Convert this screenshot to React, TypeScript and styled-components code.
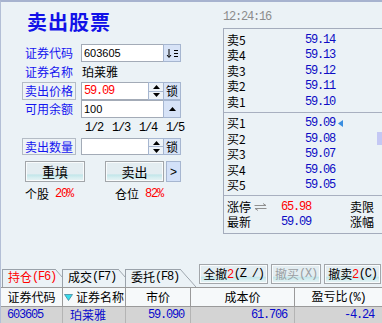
import React from "react";
import styled, { createGlobalStyle } from "styled-components";

const CJK = `"Noto Sans CJK SC", "Liberation Sans", sans-serif`;
const MONO = `"Liberation Mono", "DejaVu Sans Mono", monospace`;
const SANS = `"Liberation Sans", "Noto Sans CJK SC", sans-serif`;

const GlobalStyle = createGlobalStyle`
  html, body { margin: 0; padding: 0; background: #EBF2F6; }
  #root { width: 382px; height: 323px; }
`;

const Screen = styled.div`
  width: 382px;
  height: 323px;
  box-sizing: border-box;
  overflow: hidden;
  background: #ebf2f6;
  border-top: 2px solid #a7b3cf;
  border-left: 1px solid #b3bfd6;
  display: flex;
  flex-direction: column;
  font-family: ${CJK};
  font-size: 12px;
  color: #000;
`;

const TopArea = styled.div`
  display: flex;
  height: 260px;
  flex: none;
`;

const LeftPane = styled.div`
  width: 222px;
  flex: none;
  box-sizing: border-box;
  padding-left: 21px;
  display: flex;
  flex-direction: column;
`;

const Title = styled.div`
  margin: 8px 0 10px 5px;
  font-size: 20px;
  line-height: 24px;
  font-weight: bold;
  color: #1212e8;
  letter-spacing: 1px;
`;

const FormRow = styled.div<{ $h: number; $mt?: number }>`
  display: flex;
  align-items: center;
  gap: 5px;
  height: ${(p) => p.$h}px;
  margin-top: ${(p) => p.$mt ?? 0}px;
`;

const FieldLabel = styled.div<{ $boxed?: boolean }>`
  width: 54px;
  height: 100%;
  box-sizing: border-box;
  display: flex;
  align-items: center;
  justify-content: center;
  color: #1515f0;
  line-height: 14px;
  border: 1px solid ${(p) => (p.$boxed ? "#b4bcc6" : "transparent")};
  background: ${(p) => (p.$boxed ? "#eef3f6" : "transparent")};
`;

const Controls = styled.div`
  width: 100px;
  height: 100%;
  display: flex;
`;

const TextField = styled.div<{ $red?: boolean }>`
  flex: 1;
  min-width: 0;
  height: 100%;
  box-sizing: border-box;
  background: #fff;
  border: 1px solid #a3abb7;
  display: flex;
  align-items: center;
  padding-left: 2px;
  font-family: ${(p) => (p.$red ? MONO : SANS)};
  font-size: ${(p) => (p.$red ? "12px" : "11px")};
  letter-spacing: ${(p) => (p.$red ? "-1.2px" : "0")};
  color: ${(p) => (p.$red ? "#ff0000" : "#000")};
`;

const PlainValue = styled.div`
  color: #000;
  padding-left: 1px;
  line-height: 14px;
`;

const SideBtn = styled.div`
  width: 18px;
  flex: none;
  height: 100%;
  box-sizing: border-box;
  margin-left: -1px;
  border: 1px solid #a6b6d0;
  background: #d7e3f7;
  display: flex;
  align-items: center;
  justify-content: center;
  line-height: 14px;
`;

const Spinner = styled.div`
  width: 16px;
  flex: none;
  height: 100%;
  margin-left: -1px;
  display: flex;
  flex-direction: column;
`;

const SpinHalf = styled.div`
  flex: 1;
  box-sizing: border-box;
  border: 1px solid #a6b6d0;
  background: #eef3f8;
  display: flex;
  align-items: center;
  justify-content: center;
  & + & {
    margin-top: -1px;
  }
`;

const FracRow = styled.div`
  display: flex;
  gap: 9px;
  padding-left: 63px;
  height: 20px;
  align-items: center;
  font-family: ${MONO};
  font-size: 12px;
  letter-spacing: -1.2px;
`;

const ActionRow = styled.div`
  display: flex;
  height: 21px;
  margin-top: 6px;
  padding-left: 3px;
`;

const PushButton = styled.div<{ $w: number; $ml?: number; $disabled?: boolean }>`
  width: ${(p) => p.$w}px;
  margin-left: ${(p) => p.$ml ?? 0}px;
  height: 100%;
  box-sizing: border-box;
  border: 1px solid #a2a6aa;
  box-shadow: inset 0 0 0 1px #f8fbfc;
  background: linear-gradient(
    to bottom,
    #e3edf1 0%,
    #e3edf1 62%,
    #c2e6ea 68%,
    #d6eef0 82%,
    #e9f3f5 100%
  );
  display: flex;
  align-items: center;
  justify-content: center;
  color: ${(p) => (p.$disabled ? "#9a9ea2" : "#000")};
  line-height: 14px;
  white-space: nowrap;
`;

const BigLabel = styled.span`
  font-size: 13px;
`;

const ArrowBtn = styled.div`
  width: 15px;
  margin-left: 2px;
  height: 100%;
  box-sizing: border-box;
  border: 1px solid #a6b6d0;
  background: #d3e1f8;
  display: flex;
  align-items: center;
  justify-content: center;
  font-family: ${SANS};
  font-size: 12px;
`;

const StatusRow = styled.div`
  display: flex;
  margin-top: 5px;
  height: 14px;
  padding-left: 3px;
  align-items: center;
`;

const StatusItem = styled.div`
  width: 90px;
  display: flex;
  gap: 6px;
  align-items: center;
  line-height: 14px;
`;

const Num = styled.span<{ $color?: string }>`
  font-family: ${MONO};
  font-size: 12px;
  letter-spacing: -1.2px;
  color: ${(p) => p.$color ?? "inherit"};
`;

const RightPane = styled.div`
  flex: 1;
  display: flex;
  flex-direction: column;
  padding-top: 9px;
`;

const Clock = styled.div`
  font-family: ${MONO};
  font-size: 12px;
  letter-spacing: -1.2px;
  color: #8c8c8c;
  line-height: 13px;
  height: 13px;
`;

const QuoteBox = styled.div`
  margin-top: 4px;
  height: 206px;
  box-sizing: border-box;
  border: 1px solid #a4acbc;
  border-right: none;
  position: relative;
  display: flex;
  flex-direction: column;
`;

const BookSection = styled.div<{ $last?: boolean }>`
  padding: 3px 0 2px;
  border-bottom: ${(p) => (p.$last ? "none" : "1px solid #a8b0c0")};
  display: flex;
  flex-direction: column;
`;

const BookRow = styled.div`
  height: 15.5px;
  display: flex;
  align-items: center;
  padding-left: 3px;
  line-height: 14px;
`;

const BookLabel = styled.span<{ $w: number }>`
  width: ${(p) => p.$w}px;
  flex: none;
  display: flex;
  align-items: center;
`;

const ScrollThumb = styled.div`
  position: absolute;
  right: 0;
  top: 103px;
  width: 5px;
  height: 13px;
  background: #c4c8f4;
`;

const ToolRow = styled.div`
  height: 25px;
  flex: none;
  display: flex;
  padding-left: 1px;
`;

const TabStrip = styled.div`
  width: 196px;
  flex: none;
  display: flex;
  align-items: flex-end;
`;

const Tab = styled.div<{ $active?: boolean; $w: number }>`
  position: relative;
  width: ${(p) => p.$w}px;
  height: 18px;
  box-sizing: border-box;
  border-top: 1px solid #9aa2aa;
  border-left: 1px solid #9aa2aa;
  background: #ebf2f6;
  margin-right: 7px;
  display: flex;
  align-items: center;
  padding: 0 0 3px 5px;
  color: ${(p) => (p.$active ? "#ff0000" : "#000")};
  line-height: 14px;
  white-space: nowrap;
  &:last-child {
    margin-right: 0;
  }
  &::after {
    content: "";
    position: absolute;
    left: 100%;
    top: -1px;
    width: 16px;
    height: 18px;
    background: linear-gradient(
      to top right,
      transparent calc(50% - 0.7px),
      #9aa2aa 50%,
      transparent calc(50% + 0.7px)
    );
  }
`;

const ToolButtons = styled.div`
  display: flex;
  gap: 3px;
  margin: 2px 0 0 1px;
  height: 20px;
`;

const Red = styled.span`
  color: #ff0000;
  font-family: ${SANS};
`;

const Table = styled.div`
  display: grid;
  grid-template-columns: 62px 63px 65px 104px 1fr;
`;

const HeadCell = styled.div<{ $left?: boolean; $last?: boolean }>`
  height: 20px;
  box-sizing: border-box;
  border-top: 1px solid #9a9a9a;
  border-bottom: 1px solid #9a9a9a;
  border-right: ${(p) => (p.$last ? "none" : "1px solid #9a9a9a")};
  background: #f6f9fa;
  display: flex;
  align-items: center;
  justify-content: ${(p) => (p.$left ? "flex-start" : "center")};
  padding-left: ${(p) => (p.$left ? "1px" : "0")};
  gap: 3px;
  line-height: 14px;
  white-space: nowrap;
`;

const DataCell = styled.div<{ $align: "left" | "right"; $pad: number; $last?: boolean }>`
  height: 16px;
  box-sizing: border-box;
  background: #d4d4d4;
  border-right: ${(p) => (p.$last ? "none" : "1px solid #b4b4b4")};
  color: #0a0acc;
  display: flex;
  align-items: center;
  justify-content: ${(p) => (p.$align === "left" ? "flex-start" : "flex-end")};
  padding: ${(p) => (p.$align === "left" ? `0 0 0 ${p.$pad}px` : `0 ${p.$pad}px 0 0`)};
  line-height: 14px;
  white-space: nowrap;
`;

const SortIcon = () => (
  <svg width="13" height="11" viewBox="0 0 13 11">
    <path d="M3 1 V9" stroke="#000" strokeWidth="1" />
    <path d="M1 7 L3 9.5 L5 7" stroke="#000" strokeWidth="1" fill="none" />
    <path d="M8 2.5 H12 M8 5.5 H12 M8 8.5 H12" stroke="#000" strokeWidth="1" />
  </svg>
);

const TriUp = () => (
  <svg width="7" height="4" viewBox="0 0 7 4">
    <polygon points="0,4 7,4 3.5,0" fill="#000" />
  </svg>
);

const TriDown = () => (
  <svg width="7" height="4" viewBox="0 0 7 4">
    <polygon points="0,0 7,0 3.5,4" fill="#000" />
  </svg>
);

const LeftMarker = () => (
  <svg width="5" height="7" viewBox="0 0 5 7" style={{ marginLeft: 3 }}>
    <polygon points="5,0 5,7 0,3.5" fill="#3a8ee0" />
  </svg>
);

const SwapIcon = () => (
  <svg width="13" height="8" viewBox="0 0 13 8" style={{ marginLeft: 3 }}>
    <path d="M0.5 2.5 H12 L9 0.5" stroke="#909090" strokeWidth="1" fill="none" />
    <path d="M12.5 5.5 H1 L4 7.5" stroke="#909090" strokeWidth="1" fill="none" />
  </svg>
);

const CyanDown = () => (
  <svg width="9" height="7" viewBox="0 0 9 7">
    <polygon points="0.5,0.5 8.5,0.5 4.5,6.5" fill="#36dcea" stroke="#3a7890" strokeWidth="0.7" />
  </svg>
);

const sells = [
  ["卖5", "59.14"],
  ["卖4", "59.13"],
  ["卖3", "59.12"],
  ["卖2", "59.11"],
  ["卖1", "59.10"],
];
const buys = [
  ["买1", "59.09"],
  ["买2", "59.08"],
  ["买3", "59.07"],
  ["买4", "59.06"],
  ["买5", "59.05"],
];

export default function App() {
  return (
    <>
      <GlobalStyle />
      <Screen>
        <TopArea>
          <LeftPane>
            <Title>卖出股票</Title>
            <FormRow $h={18}>
              <FieldLabel>证券代码</FieldLabel>
              <Controls>
                <TextField>603605</TextField>
                <SideBtn>
                  <SortIcon />
                </SideBtn>
              </Controls>
            </FormRow>
            <FormRow $h={20}>
              <FieldLabel>证券名称</FieldLabel>
              <PlainValue>珀莱雅</PlainValue>
            </FormRow>
            <FormRow $h={18}>
              <FieldLabel $boxed>卖出价格</FieldLabel>
              <Controls>
                <TextField $red>59.09</TextField>
                <Spinner>
                  <SpinHalf>
                    <TriUp />
                  </SpinHalf>
                  <SpinHalf>
                    <TriDown />
                  </SpinHalf>
                </Spinner>
                <SideBtn>锁</SideBtn>
              </Controls>
            </FormRow>
            <FormRow $h={18}>
              <FieldLabel>可用余额</FieldLabel>
              <Controls>
                <TextField>100</TextField>
                <SideBtn>
                  <TriUp />
                </SideBtn>
              </Controls>
            </FormRow>
            <FracRow>
              <span>1/2</span>
              <span>1/3</span>
              <span>1/4</span>
              <span>1/5</span>
            </FracRow>
            <FormRow $h={17}>
              <FieldLabel $boxed>卖出数量</FieldLabel>
              <Controls>
                <TextField />
                <Spinner>
                  <SpinHalf>
                    <TriUp />
                  </SpinHalf>
                  <SpinHalf>
                    <TriDown />
                  </SpinHalf>
                </Spinner>
                <SideBtn>锁</SideBtn>
              </Controls>
            </FormRow>
            <ActionRow>
              <PushButton $w={60}>
                <BigLabel>重填</BigLabel>
              </PushButton>
              <PushButton $w={59} $ml={20}>
                <BigLabel>卖出</BigLabel>
              </PushButton>
              <ArrowBtn>&gt;</ArrowBtn>
            </ActionRow>
            <StatusRow>
              <StatusItem>
                个股<Num $color="#ff0000">20%</Num>
              </StatusItem>
              <StatusItem>
                仓位<Num $color="#ff0000">82%</Num>
              </StatusItem>
            </StatusRow>
          </LeftPane>
          <RightPane>
            <Clock>12:24:16</Clock>
            <QuoteBox>
              <BookSection>
                {sells.map(([l, v]) => (
                  <BookRow key={l}>
                    <BookLabel $w={78}>{l}</BookLabel>
                    <Num $color="#0c0cc4">{v}</Num>
                  </BookRow>
                ))}
              </BookSection>
              <BookSection>
                {buys.map(([l, v], i) => (
                  <BookRow key={l}>
                    <BookLabel $w={78}>{l}</BookLabel>
                    <Num $color="#0c0cc4">{v}</Num>
                    {i === 0 && <LeftMarker />}
                  </BookRow>
                ))}
              </BookSection>
              <BookSection $last>
                <BookRow>
                  <BookLabel $w={54}>
                    涨停
                    <SwapIcon />
                  </BookLabel>
                  <BookLabel $w={69}>
                    <Num $color="#ff0000">65.98</Num>
                  </BookLabel>
                  <span>卖限</span>
                </BookRow>
                <BookRow>
                  <BookLabel $w={54}>最新</BookLabel>
                  <BookLabel $w={69}>
                    <Num $color="#0c0cc4">59.09</Num>
                  </BookLabel>
                  <span>涨幅</span>
                </BookRow>
              </BookSection>
              <ScrollThumb />
            </QuoteBox>
          </RightPane>
        </TopArea>
        <ToolRow>
          <TabStrip>
            <Tab $active $w={53}>
              持仓<Num>(F6)</Num>
            </Tab>
            <Tab $w={56}>
              成交<Num>(F7)</Num>
            </Tab>
            <Tab $w={55}>
              委托<Num>(F8)</Num>
            </Tab>
          </TabStrip>
          <ToolButtons>
            <PushButton $w={69}>
              全撤<Red>2</Red>
              <Num>(Z /)</Num>
            </PushButton>
            <PushButton $w={50} $disabled>
              撤买<Num>(X)</Num>
            </PushButton>
            <PushButton $w={57}>
              撤卖<Red>2</Red>
              <Num>(C)</Num>
            </PushButton>
          </ToolButtons>
        </ToolRow>
        <Table>
          <HeadCell>证券代码</HeadCell>
          <HeadCell $left>
            <CyanDown />
            证券名称
          </HeadCell>
          <HeadCell>市价</HeadCell>
          <HeadCell>成本价</HeadCell>
          <HeadCell $last>
            <span>
              盈亏比<Num>(%)</Num>
            </span>
          </HeadCell>
          <DataCell $align="left" $pad={6}>
            <Num>603605</Num>
          </DataCell>
          <DataCell $align="left" $pad={7}>
            珀莱雅
          </DataCell>
          <DataCell $align="right" $pad={6}>
            <Num>59.090</Num>
          </DataCell>
          <DataCell $align="right" $pad={7}>
            <Num>61.706</Num>
          </DataCell>
          <DataCell $align="right" $pad={8} $last>
            <Num>-4.24</Num>
          </DataCell>
        </Table>
      </Screen>
    </>
  );
}
